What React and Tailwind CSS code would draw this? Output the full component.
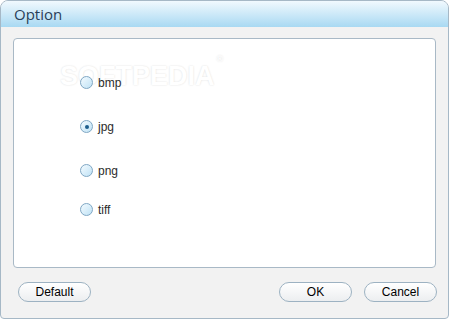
import React from "react";

const FORMATS = [
  { key: "bmp", mt: "mt-[37px]" },
  { key: "jpg", mt: "mt-[31px]", checked: true },
  { key: "png", mt: "mt-[31px]" },
  { key: "tiff", mt: "mt-[26px]" },
];

function Radio({ label, checked, className }) {
  return (
    <div className={`flex items-center gap-[5px] h-[13px] ${className}`}>
      <span className="w-[13px] h-[13px] rounded-full border border-[#7fa7c4] bg-gradient-to-br from-[#f4fbff] to-[#bfe2f5] grid place-items-center shrink-0">
        {checked && <span className="w-[4px] h-[4px] rounded-full bg-[#1d5d8c]" />}
      </span>
      <span className="text-[12px] text-[#2b2b2b] leading-none">{label}</span>
    </div>
  );
}

function Btn({ children, className }) {
  return (
    <button className={`w-[73px] h-[20px] rounded-full border border-[#9db2c2] bg-gradient-to-b from-white to-[#eceef0] text-[12px] text-black leading-none ${className}`}>
      {children}
    </button>
  );
}

export default function App() {
  return (
    <div className="w-[449px] h-[319px] bg-white" style={{ fontFamily: '"Liberation Sans", Arial, sans-serif' }}>
      <div className="w-full h-full flex flex-col border border-[#a6b8c6] rounded-t-[8px] rounded-b-[4px] bg-[#f2f2f2] overflow-hidden">
        {/* Title bar */}
        <div className="h-[26px] shrink-0 bg-gradient-to-b from-[#f1f9fe] to-[#a8d9f2] flex items-center pl-[13px]">
          <span className="text-[15px] text-[#2a3f58]" style={{ fontFamily: '"Open Sans", sans-serif' }}>Option</span>
        </div>

        <div className="flex-1 flex flex-col px-[12px] pt-[11px]">
          {/* Panel */}
          <div className="relative h-[230px] bg-white border border-[#a9b9c6] rounded-[4px] pl-[66px] flex flex-col">
            <div className="absolute left-[46px] top-[24px] text-[27px] leading-none font-bold text-white select-none" style={{ textShadow: "0 0 2px #dcdcdc" }}>
              SOFTPEDIA<sup className="text-[9px] align-top ml-[2px]">®</sup>
            </div>
            {FORMATS.map((f) => (
              <Radio key={f.key} label={f.key} checked={f.checked} className={`relative ${f.mt}`} />
            ))}
          </div>

          {/* Buttons */}
          <div className="flex items-center mt-[14px] pl-[5px]">
            <Btn>Default</Btn>
            <Btn className="ml-auto">OK</Btn>
            <Btn className="ml-[12px] mr-[-1px]">Cancel</Btn>
          </div>
        </div>
      </div>
    </div>
  );
}
